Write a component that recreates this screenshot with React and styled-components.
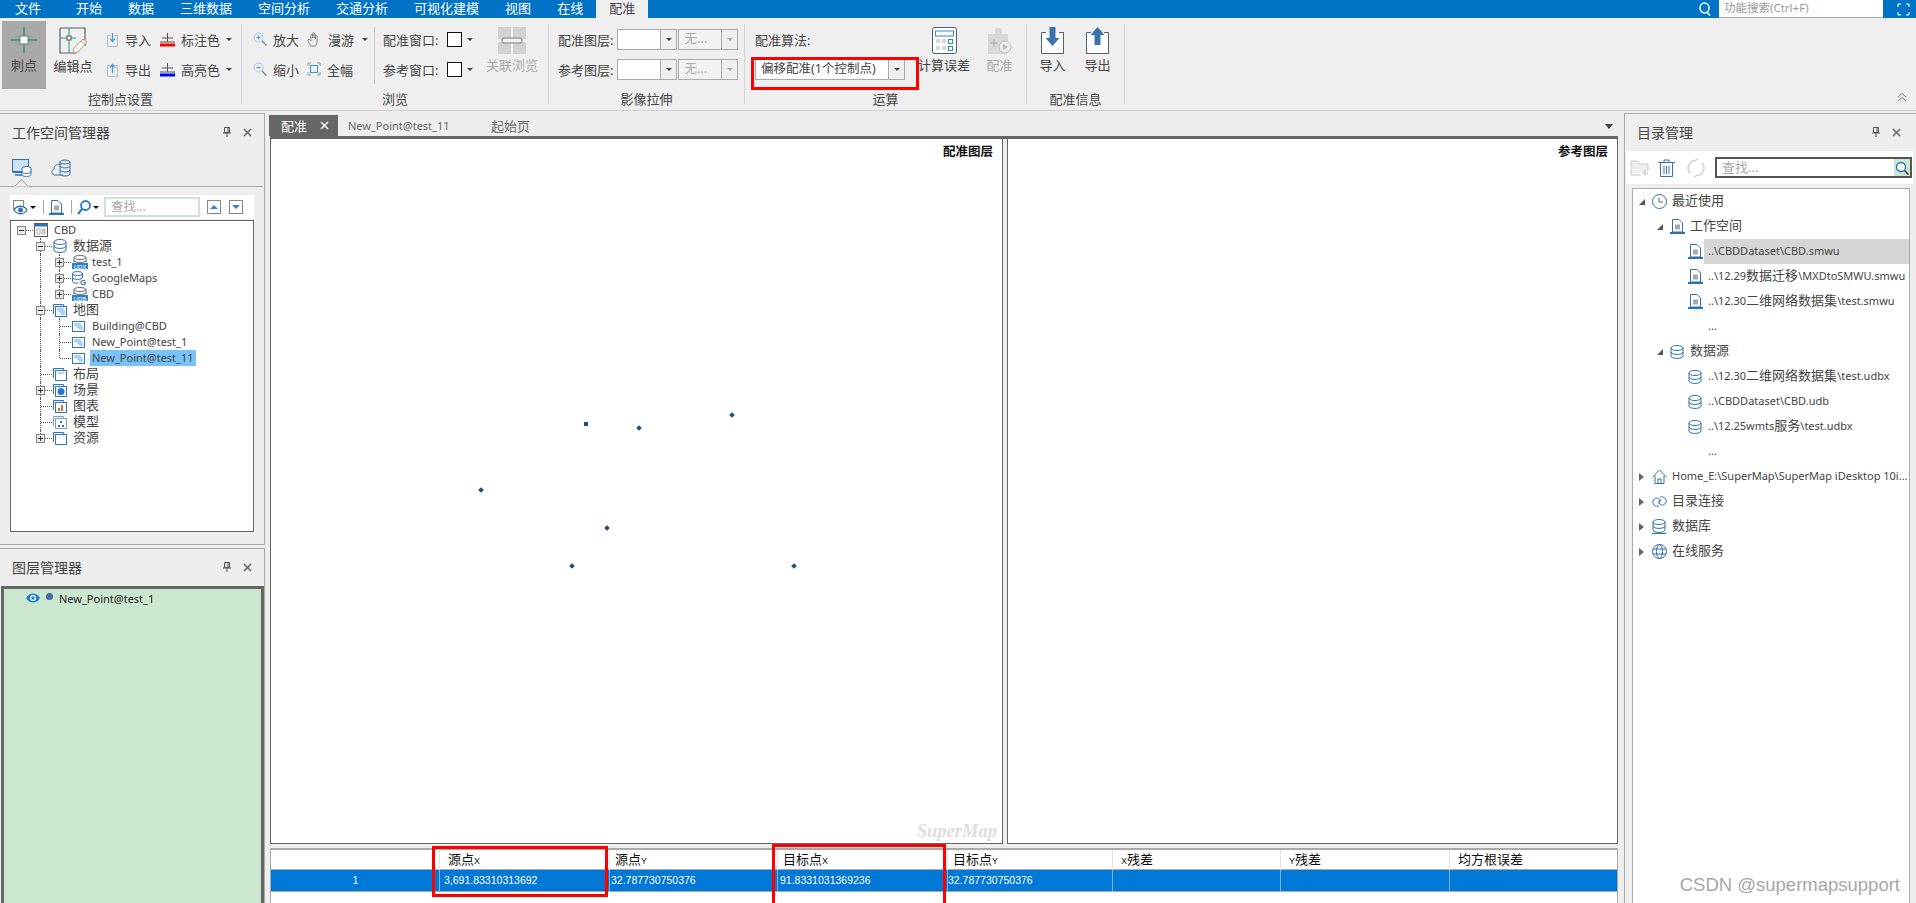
import React from "react";
import styled, { createGlobalStyle } from "styled-components";

const FONT = '"Noto Sans", "Noto Sans CJK SC", sans-serif';
const BLUE = "#2f6fb3";

const GlobalStyle = createGlobalStyle`
  html, body { margin: 0; padding: 0; background: #eeeeee; }
  body { font-family: ${FONT}; font-size: 13px; color: #444; }
  * { box-sizing: border-box; }
`;

const IconSvg = styled.svg`
  display: block;
  flex: none;
`;

const Svg = ({ w = 16, h = 16, children }) => (
  <IconSvg width={w} height={h} viewBox={`0 0 ${w} ${h}`} fill="none">
    {children}
  </IconSvg>
);

// ribbon icons
const PickIcon = () => (
  <Svg w={28} h={28}>
    <path d="M14 1v26M1 14h26" stroke="#1f9c80" strokeWidth="1.4" />
    <rect x="10" y="10" width="8" height="8" fill="#fff" stroke="#777" />
  </Svg>
);
const EditPointIcon = () => (
  <Svg w={28} h={28}>
    <path d="M1 1h25v18M1 1v25h16" stroke="#56606a" strokeWidth="1.2" />
    <path d="M10 1v25M1 11h16" stroke="#1f9c80" />
    <rect x="8" y="9" width="4" height="4" fill="#fff" stroke="#555" />
    <path d="M14 26l1-5 9-9 4 3-9 10z" fill="#fff" stroke="#c49a7c" />
    <path d="M22 14l4 3" stroke="#c49a7c" />
  </Svg>
);
const PageArrow = ({ up }) => (
  <Svg w={13} h={15}>
    <path d="M1.5 3.5h3M8.5 3.5h3v11h-10v-11" stroke="#bcbcbc" />
    <path d={up ? "M6.5 11V3M4 5.5l2.5-3 2.5 3" : "M6.5 1v8M4 6.5l2.5 3 2.5-3"} stroke="#3c9ae0" strokeWidth="1.2" />
  </Svg>
);
const MarkColor = ({ color }) => (
  <Svg w={15} h={15}>
    <path d="M7.5 1v9M2 6h11M0 10h15" stroke="#555" />
    <rect y="11.5" width="15" height="3" fill={color} />
  </Svg>
);
const Magnifier = ({ plus }) => (
  <Svg w={14} h={14}>
    <circle cx="5.5" cy="5.5" r="4.5" stroke="#9ccbea" />
    <path d="M9 9l4.5 4.5" stroke="#888" strokeWidth="1.4" />
    <path d={plus ? "M3.5 5.5h4M5.5 3.5v4" : "M3.5 5.5h4"} stroke="#3c9ae0" />
  </Svg>
);
const HandIcon = () => (
  <Svg w={15} h={15}>
    <path
      d="M4 14c-1-2-3-4-3-6 0-1 1-1 2 0l1 1V3c0-1 1.5-1 1.5 0v3-4.5c0-1 1.5-1 1.5 0V6V2.5c0-1 1.5-1 1.5 0V7V4c0-1 1.5-1 1.5 0v6c0 2-1 3-1.5 4z"
      stroke="#888"
    />
  </Svg>
);
const FullIcon = () => (
  <Svg w={14} h={14}>
    <path d="M1 4V1h3M10 1h3v3M13 10v3h-3M4 13H1v-3" stroke="#999" />
    <rect x="3.5" y="3.5" width="7" height="7" stroke="#3c9ae0" />
  </Svg>
);
const LinkIcon = () => (
  <Svg w={28} h={27}>
    <rect x="0" y="0" width="13" height="12" fill="#d2d2d2" />
    <rect x="15" y="0" width="13" height="12" fill="#d2d2d2" />
    <rect x="0" y="15" width="13" height="12" fill="#d2d2d2" />
    <rect x="15" y="15" width="13" height="12" fill="#d2d2d2" />
    <rect x="4" y="11" width="20" height="5" rx="2" stroke="#a2a2a2" strokeWidth="1.5" fill="none" />
  </Svg>
);
const CalcIcon = () => (
  <Svg w={25} h={27}>
    <rect x=".5" y=".5" width="24" height="26" rx="2" fill="#fff" stroke="#56606a" />
    <rect x="3.5" y="4" width="18" height="5" stroke="#2f8fd0" />
    <path d="M4 12h4v4H4zM10 12h4v4h-4zM4 19h4v4H4zM10 19h4v4h-4z" fill="#d5dae0" />
    <rect x="16.5" y="12.5" width="4" height="4" stroke="#2f8fd0" />
    <rect x="16.5" y="19.5" width="4" height="4" stroke="#1f9c80" />
  </Svg>
);
const RegisterIcon = () => (
  <Svg w={25} h={27}>
    <path d="M1 7h7V3c0-3 7-3 7 0v4h6v7H1z M1 14h17v13H1z" fill="#d8d8d8" />
    <circle cx="18" cy="20" r="6" fill="#eee" stroke="#bbb" />
    <path d="M16 17l5 3-5 3z" fill="#bbb" />
    <path d="M3 16h8M7 12v8" stroke="#aaa" />
  </Svg>
);
const BigArrowIcon = ({ up }) => (
  <Svg w={23} h={27}>
    <path d="M5 5.5H.5v21h22v-21H18" stroke="#56606a" fill="#fff" />
    <path d={up ? "M11.5 0l7 8h-4v10h-6V8h-4z" : "M8.5 0h6v11h4l-7 8-7-8h4z"} fill="#3a72b0" />
  </Svg>
);
const Chevrons = () => (
  <Svg w={10} h={9}>
    <path d="M1 4l4-3.500L9 4M1 8l4-3.500L9 8" stroke="#777" />
  </Svg>
);
const SearchQ = () => (
  <Svg w={12} h={14}>
    <ellipse cx="5.5" cy="6" rx="4.5" ry="5" stroke="#fff" strokeWidth="1.5" />
    <path d="M8 10l3 3.500" stroke="#fff" strokeWidth="1.5" />
  </Svg>
);
const ExpandIcon = () => (
  <Svg w={13} h={13}>
    <path d="M1 4V1h3M9 1h3v3M12 9v3H9M4 12H1V9" stroke="#fff" />
  </Svg>
);

// panel icons
const PinIcon = () => (
  <Svg w={8} h={10}>
    <path d="M1.5.5h5v5h-5zM0 6h8M4 6v4M5 1v4" stroke="#555" />
  </Svg>
);
const CloseIcon = ({ color = "#666" }) => (
  <Svg w={9} h={9}>
    <path d="M1 1l7 7M8 1L1 8" stroke={color} strokeWidth="1.5" />
  </Svg>
);
const MonitorDbIcon = () => (
  <Svg w={20} h={18}>
    <rect x=".5" y=".5" width="16" height="12" stroke={BLUE} fill="#cfe3f5" />
    <path d="M1 13h15" stroke={BLUE} strokeWidth="2" />
    <path d="M3 16h7" stroke={BLUE} strokeWidth="1.5" />
    <ellipse cx="14.5" cy="9.5" rx="4.5" ry="2" fill="#fff" stroke={BLUE} />
    <path d="M10 9.5v6c0 2.600 9 2.600 9 0v-6M10 12.500c0 2.600 9 2.600 9 0" stroke={BLUE} fill="#fff" />
  </Svg>
);
const CloudDbIcon = () => (
  <Svg w={20} h={18}>
    <path d="M12 16H4c-4 0-4-5-1-6 0-4 4-6 7-4" stroke={BLUE} />
    <ellipse cx="14" cy="3" rx="5" ry="2" stroke={BLUE} />
    <path d="M9 3v12c0 2.600 10 2.600 10 0V3M9 7c0 2.600 10 2.600 10 0M9 11c0 2.600 10 2.600 10 0" stroke={BLUE} />
  </Svg>
);
const EyeToolIcon = () => (
  <Svg w={15} h={15}>
    <rect x=".5" y=".5" width="10" height="9" stroke="#888" />
    <path d="M1 10c3-5 10-5 13 0-3 5-10 5-13 0z" fill="#fff" stroke="#3a72b0" strokeWidth="1.3" />
    <circle cx="7.5" cy="10" r="2.500" fill="#3a72b0" />
  </Svg>
);
const FindToolIcon = () => (
  <Svg w={14} h={15}>
    <circle cx="8.5" cy="5.5" r="4.5" stroke="#2a78c8" strokeWidth="1.8" />
    <path d="M5 9l-4 5" stroke="#2a78c8" strokeWidth="2.2" />
  </Svg>
);
const WorkspaceFileIcon = ({ color = BLUE }) => (
  <Svg w={15} h={15}>
    <path d="M2.5.5H9l3.5 3.500v9h-10z" fill="#fff" stroke={color} />
    <rect x="5" y="5.5" width="5" height="5" fill="#aaa" />
    <path d="M0 14h15" stroke={color} strokeWidth="2" />
  </Svg>
);
const TreeWorkspace = () => (
  <Svg w={14} h={14}>
    <rect x=".5" y=".5" width="13" height="13" fill="#fff" stroke="#555" />
    <path d="M0 2h14" stroke={BLUE} strokeWidth="3" />
    <path d="M3 6h3v5H3zM8 6h3v2H8zM8 9h3v2H8z" stroke="#aaa" />
  </Svg>
);
const DbStack = ({ h = 14, children }) => (
  <Svg w={14} h={h}>
    <ellipse cx="7" cy="3" rx="6" ry="2.5" stroke={BLUE} fill="#fff" />
    <path d="M1 3v8c0 3.200 12 3.200 12 0V3M1 7c0 3.200 12 3.200 12 0" stroke={BLUE} />
    {children}
  </Svg>
);
const SourceTag = ({ label }) => (
  <Svg w={16} h={14}>
    <ellipse cx="8" cy="2.5" rx="6" ry="2" stroke="#666" />
    <path d="M2 2.500v5M14 2.500v5M2 5.500c0 2.500 12 2.500 12 0" stroke="#666" />
    <rect x="0" y="8" width="16" height="6" fill="#2b87c9" />
    <text x="8" y="13.500" fontSize="6" fill="#fff" textAnchor="middle" fontFamily="Liberation Sans">{label}</text>
  </Svg>
);
const MapSourceIcon = () => (
  <Svg w={15} h={14}>
    <ellipse cx="5.5" cy="2.5" rx="5" ry="2" stroke={BLUE} />
    <path d="M.5 2.500v8c0 1.500 4 2 6 1.500M.5 6.500c0 2.500 10 2.500 10 0V2.500" stroke={BLUE} />
    <text x="11" y="14" fontSize="8" fontWeight="700" fill={BLUE} textAnchor="middle" fontFamily="Liberation Sans">G</text>
  </Svg>
);
const MapDoc = () => (
  <Svg w={13} h={11}>
    <rect x=".5" y=".5" width="12" height="10" fill="#fff" stroke="#2a74cf" />
    <path d="M2 2h6l3 4v3H8L2 4z" fill="#a9d3f5" />
  </Svg>
);
const FolderStack = ({ inner, color = "#2a74cf" }) => (
  <Svg w={14} h={13}>
    <path d="M.5 10V.5h10v2" stroke={color} />
    <rect x="2.5" y="2.5" width="11" height="10" fill="#fff" stroke={color} />
    {inner}
  </Svg>
);
const ClockIcon = () => (
  <Svg w={15} h={15}>
    <circle cx="7.5" cy="7.5" r="7" stroke={BLUE} />
    <path d="M7 3.500V8h4" stroke="#666" />
  </Svg>
);
const HomeIcon = () => (
  <Svg w={15} h={15}>
    <path d="M.5 8l7-7 7 7M3 6.500v8h9v-8M6 14.500V10h3v4.500" stroke={BLUE} />
  </Svg>
);
const LinkedIcon = () => (
  <Svg w={15} h={13}>
    <path d="M7 11C3 12 0 9 1 6s4-4 6-2 1 4-1 4M8 2c4-1 7 2 6 5s-4 4-6 2-1-4 1-4" stroke={BLUE} />
  </Svg>
);
const DbLineIcon = () => (
  <DbStack h={15}>
    <path d="M0 14.500h14" stroke={BLUE} />
  </DbStack>
);
const GlobeIcon = () => (
  <Svg w={15} h={15}>
    <circle cx="7.5" cy="7.5" r="7" stroke={BLUE} />
    <ellipse cx="7.5" cy="7.5" rx="3" ry="7" stroke={BLUE} />
    <path d="M1 5h13M1 10h13" stroke={BLUE} />
  </Svg>
);

const Page = styled.div`
  position: relative;
  width: 1916px;
  height: 903px;
  overflow: hidden;
  display: flex;
  flex-direction: column;
  background: #eeeeee;
`;

// top menu
const MenuBar = styled.div`
  height: 18px;
  flex: none;
  display: flex;
  align-items: stretch;
  background: #0173c7;
  padding-left: 2px;
`;
const MenuItem = styled.div`
  padding: 0 13px;
  margin-right: ${(p) => (p.$first ? 9 : 0)}px;
  line-height: 17px;
  font-size: 13px;
  color: ${(p) => (p.$active ? "#444" : "#fff")};
  background: ${(p) => (p.$active ? "#efefef" : "transparent")};
`;
const MenuRight = styled.div`
  margin-left: auto;
  display: flex;
  align-items: center;
  padding-right: 6px;
`;
const FeatureSearch = styled.div`
  width: 164px;
  height: 18px;
  margin: 0 14px 0 8px;
  padding-left: 5px;
  background: #fff;
  border-bottom: 1px solid #aaa;
  color: #999;
  font-size: 11.5px;
  line-height: 16px;
`;

// ribbon
const Ribbon = styled.div`
  height: 93px;
  flex: none;
  display: flex;
  padding-top: 6px;
  background: #efefef;
  border-bottom: 1px solid #cfcfcf;
`;
const Group = styled.div`
  width: ${(p) => p.$w}px;
  height: 80px;
  flex: none;
  display: flex;
  flex-direction: column;
  border-right: 1px solid #d4d4d4;
`;
const GroupBody = styled.div`
  height: 67px;
  flex: none;
  display: flex;
  align-items: flex-start;
  padding-left: ${(p) => p.$pad || 0}px;
`;
const GroupLabel = styled.div`
  height: 13px;
  text-align: center;
  font-size: 13px;
  line-height: 17px;
  color: #444;
`;
const BigButton = styled.div`
  width: ${(p) => p.$w}px;
  margin-left: ${(p) => p.$ml || 0}px;
  flex: none;
  display: flex;
  flex-direction: column;
  align-items: center;
  gap: 2px;
  padding-top: 3px;
  font-size: 13px;
  line-height: 18px;
  white-space: nowrap;
  color: ${(p) => (p.$off ? "#aaa" : "#444")};
`;
const PickButton = styled(BigButton)`
  height: 68px;
  margin-top: -3px;
  padding-top: 5px;
  background: #a9a9a9;
`;
const SmallColumn = styled.div`
  width: ${(p) => p.$w}px;
  margin-left: ${(p) => p.$ml || 0}px;
  flex: none;
  display: flex;
  flex-direction: column;
`;
const SmallRow = styled.div`
  height: 30px;
  display: flex;
  align-items: center;
  gap: ${(p) => p.$gap ?? 6}px;
  font-size: 13px;
  white-space: nowrap;
`;
const DropArrow = styled.span`
  flex: none;
  margin-left: ${(p) => p.$ml || 0}px;
  width: 0;
  height: 0;
  border-left: 3px solid transparent;
  border-right: 3px solid transparent;
  border-top: 3px solid ${(p) => p.$color || "#444"};
`;
const InnerRule = styled.div`
  width: 1px;
  height: 57px;
  margin-top: 3px;
  flex: none;
  background: #c8c8c8;
`;
const Swatch = styled.span`
  width: 15px;
  height: 15px;
  margin-left: 9px;
  background: #fff;
  border: 1px solid #111;
  flex: none;
`;
const Combo = styled.div`
  width: ${(p) => p.$w}px;
  height: 21px;
  margin-left: ${(p) => p.$ml || 0}px;
  flex: none;
  display: flex;
  align-items: stretch;
  background: ${(p) => (p.$off ? "#f2f2f2" : "#fff")};
  border: 1px solid #aaa;
  font-size: 12.5px;
  line-height: 18px;
  color: ${(p) => (p.$off ? "#aaa" : "#444")};
`;
const ComboText = styled.div`
  flex: 1;
  padding-left: 5px;
  white-space: nowrap;
  overflow: hidden;
`;
const ComboButton = styled.div`
  width: 16px;
  flex: none;
  display: flex;
  align-items: center;
  justify-content: center;
  background: #efefef;
  border-left: 1px solid #aaa;
`;
const CollapseSlot = styled.div`
  margin: auto 9px 8px auto;
`;

// main area
const Body = styled.div`
  flex: 1;
  min-height: 0;
  display: flex;
`;
const LeftColumn = styled.div`
  width: 265px;
  flex: none;
  padding-top: 2px;
  display: flex;
  flex-direction: column;
  gap: 3px;
`;
const Panel = styled.div`
  width: ${(p) => (p.$wide ? "100%" : "auto")};
  height: ${(p) => (p.$h ? `${p.$h}px` : "auto")};
  flex: ${(p) => (p.$h ? "none" : "1")};
  min-height: 0;
  display: flex;
  flex-direction: column;
  border-top: 1px solid #a9a9a9;
  border-right: ${(p) => (p.$wide ? "none" : "1px solid #a9a9a9")};
  border-left: ${(p) => (p.$wide ? "1px solid #a9a9a9" : "none")};
  border-bottom: ${(p) => (p.$open ? "none" : "1px solid #a9a9a9")};
`;
const PanelHeader = styled.div`
  height: 36px;
  flex: none;
  display: flex;
  align-items: center;
  padding: 0 12px;
  font-size: 14px;
  color: #444;
`;
const PanelTools = styled.div`
  margin-left: auto;
  margin-right: ${(p) => p.$mr || 0}px;
  display: flex;
  align-items: center;
  gap: 12px;
`;
const KindTabs = styled.div`
  position: relative;
  height: 37px;
  flex: none;
  display: flex;
  gap: 19px;
  padding: 9px 0 0 12px;
  margin-right: 1px;
  border-bottom: 1px solid #a9a9a9;
  &::after {
    content: "";
    position: absolute;
    left: 16px;
    bottom: -1px;
    width: 10px;
    height: 10px;
    background: #eee;
    border-left: 1px solid #a9a9a9;
    border-top: 1px solid #a9a9a9;
    transform: translateY(5px) rotate(45deg);
    clip-path: polygon(0 0, 100% 0, 0 100%);
  }
`;
const TreeToolbar = styled.div`
  height: 24px;
  margin: 8px 10px 1px 10px;
  flex: none;
  display: flex;
  align-items: center;
  padding-left: 3px;
  background: #fff;
`;
const ToolRule = styled.span`
  width: 1px;
  height: ${(p) => (p.$tall ? 24 : 14)}px;
  margin: ${(p) => (p.$tall ? "0" : "0 5px 0 7px")};
  background: #aaa;
  flex: none;
`;
const FindBox = styled.div`
  width: 96px;
  height: 20px;
  margin-left: 5px;
  padding-left: 5px;
  border: 2px solid #cbe5ce;
  color: #aaa;
  font-size: 12.5px;
  line-height: 15px;
`;
const StepButton = styled.div`
  width: 14px;
  height: 14px;
  margin-left: ${(p) => p.$ml}px;
  display: flex;
  align-items: center;
  justify-content: center;
  border: 1px solid #888;
  &::before {
    content: "";
    border-left: 4px solid transparent;
    border-right: 4px solid transparent;
    ${(p) => (p.$up ? "border-bottom" : "border-top")}: 4px solid #3a80c5;
  }
`;
const WorkspaceTree = styled.div`
  height: 312px;
  margin: 0 10px 11px 10px;
  padding: 1px 0 0 1px;
  flex: none;
  background: #fff;
  border: 1px solid #666;
`;
const TreeRow = styled.div`
  height: 16px;
  display: flex;
  align-items: center;
`;
const Guide = styled.span`
  position: relative;
  width: 19px;
  height: 16px;
  flex: none;
  display: flex;
  align-items: center;
  justify-content: center;
  &::before {
    content: "";
    display: ${(p) => (p.$kind === " " || p.$kind === "R" ? "none" : "block")};
    position: absolute;
    left: 9px;
    top: 0;
    height: ${(p) => (p.$kind === "L" ? 8 : 16)}px;
    border-left: 1px dotted #555;
  }
  &::after {
    content: "";
    display: ${(p) => (p.$kind === " " || p.$kind === "|" ? "none" : "block")};
    position: absolute;
    left: 10px;
    top: 8px;
    width: 11px;
    border-top: 1px dotted #555;
  }
`;
const Expander = styled.span`
  position: relative;
  z-index: 1;
  width: 9px;
  height: 9px;
  display: flex;
  background: #e8e8e8;
  border: 1px solid #888;
`;
const NodeIcon = styled.span`
  width: 16px;
  margin-left: 3px;
  flex: none;
`;
const NodeLabel = styled.span`
  margin-left: 2px;
  padding: 0 2px;
  height: 16px;
  line-height: 15px;
  font-size: ${(p) => (p.$cjk ? 13 : 11)}px;
  white-space: nowrap;
  color: #444;
  background: ${(p) => (p.$on ? "#79c3fb" : "transparent")};
`;
const LayerList = styled.div`
  flex: 1;
  margin: 1px 0 0 1px;
  background: #cce7cf;
  border: 3px solid #666;
  border-bottom: none;
`;
const LayerRow = styled.div`
  height: 18px;
  display: flex;
  align-items: center;
  padding-left: 22px;
  font-size: 11px;
  color: #222;
`;
const LayerDot = styled.span`
  width: 7px;
  height: 7px;
  margin: 0 6px 4px 6px;
  border-radius: 50%;
  background: #3f6da3;
`;

const Center = styled.div`
  width: 1353px;
  flex: none;
  margin-left: 4px;
  padding-top: 4px;
  display: flex;
  flex-direction: column;
`;
const TabStrip = styled.div`
  height: 21px;
  flex: none;
  display: flex;
  align-items: stretch;
`;
const DocTab = styled.div`
  width: ${(p) => p.$w}px;
  display: flex;
  align-items: center;
  padding-left: ${(p) => p.$pad || 0}px;
  gap: 13px;
  font-size: ${(p) => (p.$cjk ? 13 : 11)}px;
  white-space: nowrap;
  color: ${(p) => (p.$active ? "#fff" : "#666")};
  background: ${(p) => (p.$active ? "#666" : "transparent")};
`;
const TabMenu = styled.span`
  margin: 9px 9px 0 auto;
  width: 0;
  height: 0;
  border-left: 4px solid transparent;
  border-right: 4px solid transparent;
  border-top: 5px solid #444;
`;
const ViewRow = styled.div`
  flex: 1;
  min-height: 0;
  width: 1348px;
  margin-left: 1px;
  display: flex;
  gap: 4px;
  border-top: 3px solid #666;
`;
const MapView = styled.div`
  position: relative;
  flex: ${(p) => p.$w}px 0 0;
  padding: 5px 9px 0 0;
  text-align: right;
  font-size: 12.5px;
  font-weight: 700;
  line-height: 15px;
  color: #111;
  background: #fff;
  border: 1px solid #666;
  border-top: none;
`;
const MapPoint = styled.span`
  position: absolute;
  width: 4px;
  height: 4px;
  background: #1f4f86;
  transform: ${(p) => (p.$square ? "none" : "rotate(45deg)")};
  left: ${(p) => p.$x}px;
  top: ${(p) => p.$y}px;
`;
const MapMark = styled.span`
  position: absolute;
  right: 5px;
  bottom: 4px;
  font-family: "Liberation Serif", serif;
  font-size: 18.5px;
  font-style: italic;
  font-weight: 700;
  color: #dedede;
`;
const GridTable = styled.div`
  width: 1348px;
  height: 55px;
  margin: 4px 0 0 1px;
  flex: none;
  background: #fff;
  border-top: 2px solid #aaa;
  border-left: 1px solid #aaa;
  border-right: 1px solid #aaa;
`;
const GridRow = styled.div`
  display: grid;
  grid-template-columns: 168px 170px 168px 170px 165px 168px 169px 1fr;
  height: ${(p) => (p.$head ? 19 : 23)}px;
  background: ${(p) => (p.$head ? "#fff" : "#0078d7")};
  border-top: ${(p) => (p.$head ? "none" : "1px solid #a9a9a9")};
  border-bottom: ${(p) => (p.$head ? "none" : "1px solid #a9a9a9")};
`;
const HeadCell = styled.div`
  padding-left: ${(p) => p.$pad ?? 8}px;
  font-size: 13px;
  line-height: 18px;
  color: #111;
  border-left: ${(p) => (p.$first ? "none" : "1px solid #e2e2e2")};
`;
const HeadLatin = styled.span`
  font-family: "Liberation Sans", sans-serif;
  font-size: 9px;
`;
const DataCell = styled.div`
  padding-left: ${(p) => p.$pad ?? 1}px;
  font-family: "Liberation Sans", sans-serif;
  font-size: 10.5px;
  line-height: 20px;
  color: #fff;
  text-align: ${(p) => (p.$first ? "center" : "left")};
  border-left: ${(p) => (p.$first ? "none" : "1px solid #7fb2dd")};
`;

const RightPanelWrap = styled.div`
  flex: 1;
  min-width: 0;
  margin-left: 2px;
  padding-top: 2px;
  display: flex;
`;
const CatalogToolbar = styled.div`
  height: 33px;
  margin: 1px 3px 4px 1px;
  flex: none;
  display: flex;
  align-items: center;
  padding-left: 4px;
  background: #fff;
`;
const ToolSlot = styled.span`
  margin-left: ${(p) => p.$ml || 0}px;
  flex: none;
`;
const CatalogFind = styled.div`
  flex: 1;
  height: 21px;
  margin: 0 1px 0 3px;
  display: flex;
  padding-left: 5px;
  border: 2px solid #555;
  background: #fff;
  color: #aaa;
  font-size: 13px;
  line-height: 16px;
`;
const FindButton = styled.span`
  margin-left: auto;
  width: 16px;
  display: flex;
  align-items: center;
  justify-content: center;
  background: #cce7cf;
`;
const CatalogTree = styled.div`
  flex: 1;
  margin: 0 6px 0 7px;
  background: #fff;
  border: 1px solid #aaa;
  border-bottom: none;
`;
const CatalogRow = styled.div`
  height: 25px;
  display: flex;
  align-items: center;
  padding-left: ${(p) => 6 + p.$level * 18}px;
`;
const ArrowSlot = styled.span`
  width: 13px;
  flex: none;
`;
const OpenArrow = styled.span`
  display: block;
  width: 0;
  height: 0;
  ${(p) =>
    p.$open
      ? "border-bottom: 6px solid #555; border-left: 6px solid transparent;"
      : "border-left: 5px solid #666; border-top: 4px solid transparent; border-bottom: 4px solid transparent;"}
`;
const IconSlot = styled.span`
  width: 16px;
  flex: none;
`;
const CatalogLabel = styled.span`
  flex: 1;
  height: 25px;
  padding-left: 4px;
  line-height: 23px;
  font-size: ${(p) => (p.$small ? 11 : 13)}px;
  white-space: nowrap;
  color: #444;
  background: ${(p) => (p.$on ? "#d6d6d6" : "transparent")};
`;
const CjkPart = styled.span`
  font-size: 13px;
`;

// annotations on top of the screenshot
const RedBox = styled.div`
  position: absolute;
  left: ${(p) => p.$x}px;
  top: ${(p) => p.$y}px;
  width: ${(p) => p.$w}px;
  height: ${(p) => p.$h}px;
  border: 3px solid #f00;
  pointer-events: none;
`;
const Watermark = styled.div`
  position: absolute;
  right: 16px;
  bottom: 7px;
  font-family: "Liberation Sans", sans-serif;
  font-size: 18.5px;
  color: #a8a8a8;
`;

const menus = ["文件", "开始", "数据", "三维数据", "空间分析", "交通分析", "可视化建模", "视图", "在线", "配准"];

const MinusPlus = ({ open }) => (
  <Svg w={7} h={7}>
    <path d={open ? "M1 3.500h5" : "M1 3.500h5M3.500 1v5"} stroke="#333" />
  </Svg>
);

const workspaceNodes = [
  { guides: "R", exp: "-", icon: <TreeWorkspace />, label: "CBD" },
  { guides: " T", exp: "-", icon: <DbStack />, label: "数据源", cjk: true },
  { guides: " |T", exp: "+", icon: <SourceTag label="UDX" />, label: "test_1" },
  { guides: " |T", exp: "+", icon: <MapSourceIcon />, label: "GoogleMaps" },
  { guides: " |L", exp: "+", icon: <SourceTag label="UDB" />, label: "CBD" },
  { guides: " T", exp: "-", icon: <FolderStack inner={<path d="M4 4h6l2 3v4H9L4 6z" fill="#a9d3f5" />} />, label: "地图", cjk: true },
  { guides: " |T", icon: <MapDoc />, label: "Building@CBD" },
  { guides: " |T", icon: <MapDoc />, label: "New_Point@test_1" },
  { guides: " |L", icon: <MapDoc />, label: "New_Point@test_11", on: true },
  { guides: " T", icon: <FolderStack inner={<path d="M4.500 5h7" stroke="#999" />} />, label: "布局", cjk: true },
  { guides: " T", exp: "+", icon: <FolderStack inner={<circle cx="8" cy="7.500" r="3.500" fill="#2a74cf" />} />, label: "场景", cjk: true },
  { guides: " T", icon: <FolderStack inner={<path d="M5 8h2v3H5zM8 5h2v6H8z" fill="#c8762c" />} />, label: "图表", cjk: true },
  { guides: " T", icon: <FolderStack color="#7d9fc4" inner={<path d="M7 5h2v2H7zM5 9h2v2H5zM9 9h2v2H9z" fill="#2a74cf" />} />, label: "模型", cjk: true },
  { guides: " L", exp: "+", icon: <FolderStack />, label: "资源", cjk: true },
];

const catalogNodes = [
  { level: 0, arrow: "open", icon: <ClockIcon />, label: "最近使用" },
  { level: 1, arrow: "open", icon: <WorkspaceFileIcon />, label: "工作空间" },
  { level: 2, icon: <WorkspaceFileIcon />, small: true, on: true, label: "..\\CBDDataset\\CBD.smwu" },
  { level: 2, icon: <WorkspaceFileIcon />, small: true, label: <>..\12.29<CjkPart>数据迁移</CjkPart>\MXDtoSMWU.smwu</> },
  { level: 2, icon: <WorkspaceFileIcon />, small: true, label: <>..\12.30<CjkPart>二维网络数据集</CjkPart>\test.smwu</> },
  { level: 2, small: true, label: "..." },
  { level: 1, arrow: "open", icon: <DbStack />, label: "数据源" },
  { level: 2, icon: <DbStack />, small: true, label: <>..\12.30<CjkPart>二维网络数据集</CjkPart>\test.udbx</> },
  { level: 2, icon: <DbStack />, small: true, label: "..\\CBDDataset\\CBD.udb" },
  { level: 2, icon: <DbStack />, small: true, label: <>..\12.25wmts<CjkPart>服务</CjkPart>\test.udbx</> },
  { level: 2, small: true, label: "..." },
  { level: 0, arrow: "shut", icon: <HomeIcon />, small: true, label: "Home_E:\\SuperMap\\SuperMap iDesktop 10i..." },
  { level: 0, arrow: "shut", icon: <LinkedIcon />, label: "目录连接" },
  { level: 0, arrow: "shut", icon: <DbLineIcon />, label: "数据库" },
  { level: 0, arrow: "shut", icon: <GlobeIcon />, label: "在线服务" },
];

const points = [
  [313, 283, true], [366, 287], [459, 274], [208, 349], [334, 387], [299, 425], [521, 425],
];

const columns = [
  { head: "源点", latin: "X", pad: 8, value: "3,691.83310313692", valuePad: 4 },
  { head: "源点", latin: "Y", pad: 5, value: "32.787730750376" },
  { head: "目标点", latin: "X", pad: 5, value: "91.8331031369236", valuePad: 2 },
  { head: "目标点", latin: "Y", pad: 5, value: "32.787730750376", valuePad: 0 },
  { head: "", latin: "X", tail: "残差", pad: 8, value: "" },
  { head: "", latin: "Y", tail: "残差", pad: 8, value: "" },
  { head: "均方根误差", latin: "", pad: 8, value: "" },
];

const LayerCombo = () => (
  <Combo $w={60}>
    <ComboText />
    <ComboButton><DropArrow /></ComboButton>
  </Combo>
);
const OffCombo = () => (
  <Combo $w={60} $off $ml={-3}>
    <ComboText>无...</ComboText>
    <ComboButton><DropArrow $color="#aaa" /></ComboButton>
  </Combo>
);

const App = () => {
  return (
    <Page>
      <GlobalStyle />
      <MenuBar>
        {menus.map((m, i) => (
          <MenuItem key={m} $first={i === 0} $active={m === "配准"}>{m}</MenuItem>
        ))}
        <MenuRight>
          <SearchQ />
          <FeatureSearch>功能搜索(Ctrl+F)</FeatureSearch>
          <ExpandIcon />
        </MenuRight>
      </MenuBar>

      <Ribbon>
        <Group $w={242}>
          <GroupBody $pad={2}>
            <PickButton $w={44}><PickIcon />刺点</PickButton>
            <BigButton $w={42} $ml={6}><EditPointIcon />编辑点</BigButton>
            <SmallColumn $w={54} $ml={12}>
              <SmallRow><PageArrow />导入</SmallRow>
              <SmallRow><PageArrow up />导出</SmallRow>
            </SmallColumn>
            <SmallColumn $w={78}>
              <SmallRow><MarkColor color="#f00" />标注色<DropArrow /></SmallRow>
              <SmallRow><MarkColor color="#00f" />高亮色<DropArrow /></SmallRow>
            </SmallColumn>
          </GroupBody>
          <GroupLabel>控制点设置</GroupLabel>
        </Group>

        <Group $w={307}>
          <GroupBody $pad={11}>
            <SmallColumn $w={54}>
              <SmallRow><Magnifier plus />放大</SmallRow>
              <SmallRow><Magnifier />缩小</SmallRow>
            </SmallColumn>
            <SmallColumn $w={67}>
              <SmallRow><HandIcon />漫游<DropArrow $ml={2} /></SmallRow>
              <SmallRow><FullIcon />全幅</SmallRow>
            </SmallColumn>
            <InnerRule />
            <SmallColumn $w={103} $ml={8}>
              <SmallRow $gap={0}>配准窗口:<Swatch /><DropArrow $ml={5} /></SmallRow>
              <SmallRow $gap={0}>参考窗口:<Swatch /><DropArrow $ml={5} /></SmallRow>
            </SmallColumn>
            <BigButton $w={52} $off><LinkIcon />关联浏览</BigButton>
          </GroupBody>
          <GroupLabel>浏览</GroupLabel>
        </Group>

        <Group $w={196}>
          <GroupBody $pad={9}>
            <SmallColumn $w={181}>
              <SmallRow $gap={4}>配准图层:<LayerCombo /><OffCombo /></SmallRow>
              <SmallRow $gap={4}>参考图层:<LayerCombo /><OffCombo /></SmallRow>
            </SmallColumn>
          </GroupBody>
          <GroupLabel>影像拉伸</GroupLabel>
        </Group>

        <Group $w={282}>
          <GroupBody $pad={10}>
            <SmallColumn $w={150}>
              <SmallRow>配准算法:</SmallRow>
              <SmallRow>
                <Combo $w={150}><ComboText>偏移配准(1个控制点)</ComboText><ComboButton><DropArrow /></ComboButton></Combo>
              </SmallRow>
            </SmallColumn>
            <BigButton $w={52} $ml={13}><CalcIcon />计算误差</BigButton>
            <BigButton $w={27} $ml={16} $off><RegisterIcon />配准</BigButton>
          </GroupBody>
          <GroupLabel>运算</GroupLabel>
        </Group>

        <Group $w={98}>
          <GroupBody $pad={12}>
            <BigButton $w={27}><BigArrowIcon />导入</BigButton>
            <BigButton $w={27} $ml={18}><BigArrowIcon up />导出</BigButton>
          </GroupBody>
          <GroupLabel>配准信息</GroupLabel>
        </Group>
        <CollapseSlot><Chevrons /></CollapseSlot>
      </Ribbon>

      <Body>
        <LeftColumn>
          <Panel $h={432}>
            <PanelHeader>
              工作空间管理器
              <PanelTools><PinIcon /><CloseIcon /></PanelTools>
            </PanelHeader>
            <KindTabs>
              <MonitorDbIcon />
              <CloudDbIcon />
            </KindTabs>
            <TreeToolbar>
              <EyeToolIcon />
              <DropArrow $ml={2} $color="#111" />
              <ToolRule />
              <WorkspaceFileIcon color="#3a72b0" />
              <ToolRule />
              <FindToolIcon />
              <DropArrow $ml={2} $color="#111" />
              <FindBox>查找...</FindBox>
              <StepButton $up $ml={7} />
              <StepButton $ml={8} />
            </TreeToolbar>
            <WorkspaceTree>
              {workspaceNodes.map((n, i) => (
                <TreeRow key={i}>
                  {[...n.guides].map((g, j) => (
                    <Guide key={j} $kind={g}>
                      {j === n.guides.length - 1 && n.exp && (
                        <Expander><MinusPlus open={n.exp === "-"} /></Expander>
                      )}
                    </Guide>
                  ))}
                  <NodeIcon>{n.icon}</NodeIcon>
                  <NodeLabel $cjk={n.cjk} $on={n.on}>{n.label}</NodeLabel>
                </TreeRow>
              ))}
            </WorkspaceTree>
          </Panel>
          <Panel $open>
            <PanelHeader>
              图层管理器
              <PanelTools><PinIcon /><CloseIcon /></PanelTools>
            </PanelHeader>
            <LayerList>
              <LayerRow>
                <Svg w={14} h={10}>
                  <path d="M0 5c3-6 11-6 14 0-3 6-11 6-14 0z" fill="#1f7fd0" />
                  <circle cx="7" cy="5" r="3" fill="#fff" />
                  <circle cx="7" cy="5" r="1.8" fill="#1f7fd0" />
                </Svg>
                <LayerDot />
                New_Point@test_1
              </LayerRow>
            </LayerList>
          </Panel>
        </LeftColumn>

        <Center>
          <TabStrip>
            <DocTab $active $cjk $w={69} $pad={12}>配准<CloseIcon color="#fff" /></DocTab>
            <DocTab $w={153} $pad={10}>New_Point@test_11</DocTab>
            <DocTab $cjk $w={60}>起始页</DocTab>
            <TabMenu />
          </TabStrip>
          <ViewRow>
            <MapView $w={733}>
              配准图层
              {points.map(([x, y, square]) => (
                <MapPoint key={x} $x={x} $y={y} $square={square} />
              ))}
              <MapMark>SuperMap</MapMark>
            </MapView>
            <MapView $w={611}>参考图层</MapView>
          </ViewRow>
          <GridTable>
            <GridRow $head>
              <HeadCell $first />
              {columns.map((c, i) => (
                <HeadCell key={i} $pad={c.pad}>
                  {c.head}<HeadLatin>{c.latin}</HeadLatin>{c.tail}
                </HeadCell>
              ))}
            </GridRow>
            <GridRow>
              <DataCell $first>1</DataCell>
              {columns.map((c, i) => <DataCell key={i} $pad={c.valuePad}>{c.value}</DataCell>)}
            </GridRow>
          </GridTable>
        </Center>

        <RightPanelWrap>
          <Panel $wide $open>
            <PanelHeader>
              目录管理
              <PanelTools $mr={3}><PinIcon /><CloseIcon /></PanelTools>
            </PanelHeader>
            <CatalogToolbar>
              <Svg w={20} h={18}>
                <path d="M1 16V2h6l2 3h9v7M1 16h10" stroke="#c8c8c8" fill="#eee" />
                <path d="M15 11v6M12 14h6" stroke="#c0c0c0" />
              </Svg>
              <ToolSlot $ml={8}>
                <Svg w={17} h={18}>
                  <path d="M0 3.5h17M6 3V1h5v2M2.5 4v13.5h12V4M6 7v8M8.5 7v8M11 7v8" stroke="#3a72b0" />
                </Svg>
              </ToolSlot>
              <ToolSlot $ml={12}>
                <Svg w={18} h={18}>
                  <path d="M3 14A7.5 7.5 0 0 1 9 1.5M15 4a7.5 7.5 0 0 1-6 12.5M9 1l2-1M9 17l-2 1" stroke="#cfcfcf" strokeWidth="1.5" />
                </Svg>
              </ToolSlot>
              <ToolSlot $ml={7}><ToolRule $tall /></ToolSlot>
              <CatalogFind>
                查找...
                <FindButton>
                  <Svg w={14} h={14}>
                    <circle cx="6" cy="6" r="4.5" stroke="#2f6fb3" strokeWidth="1.3" fill="#fff" />
                    <path d="M9.5 9.5l4 4" stroke="#333" strokeWidth="1.5" />
                  </Svg>
                </FindButton>
              </CatalogFind>
            </CatalogToolbar>
            <CatalogTree>
              {catalogNodes.map((n, i) => (
                <CatalogRow key={i} $level={n.level}>
                  <ArrowSlot>{n.arrow && <OpenArrow $open={n.arrow === "open"} />}</ArrowSlot>
                  <IconSlot>{n.icon}</IconSlot>
                  <CatalogLabel $small={n.small} $on={n.on}>{n.label}</CatalogLabel>
                </CatalogRow>
              ))}
            </CatalogTree>
          </Panel>
        </RightPanelWrap>
      </Body>

      <RedBox $x={751} $y={57} $w={168} $h={33} />
      <RedBox $x={432} $y={846} $w={176} $h={51} />
      <RedBox $x={772} $y={844} $w={174} $h={62} />
      <Watermark>CSDN @supermapsupport</Watermark>
    </Page>
  );
};

export default App;
